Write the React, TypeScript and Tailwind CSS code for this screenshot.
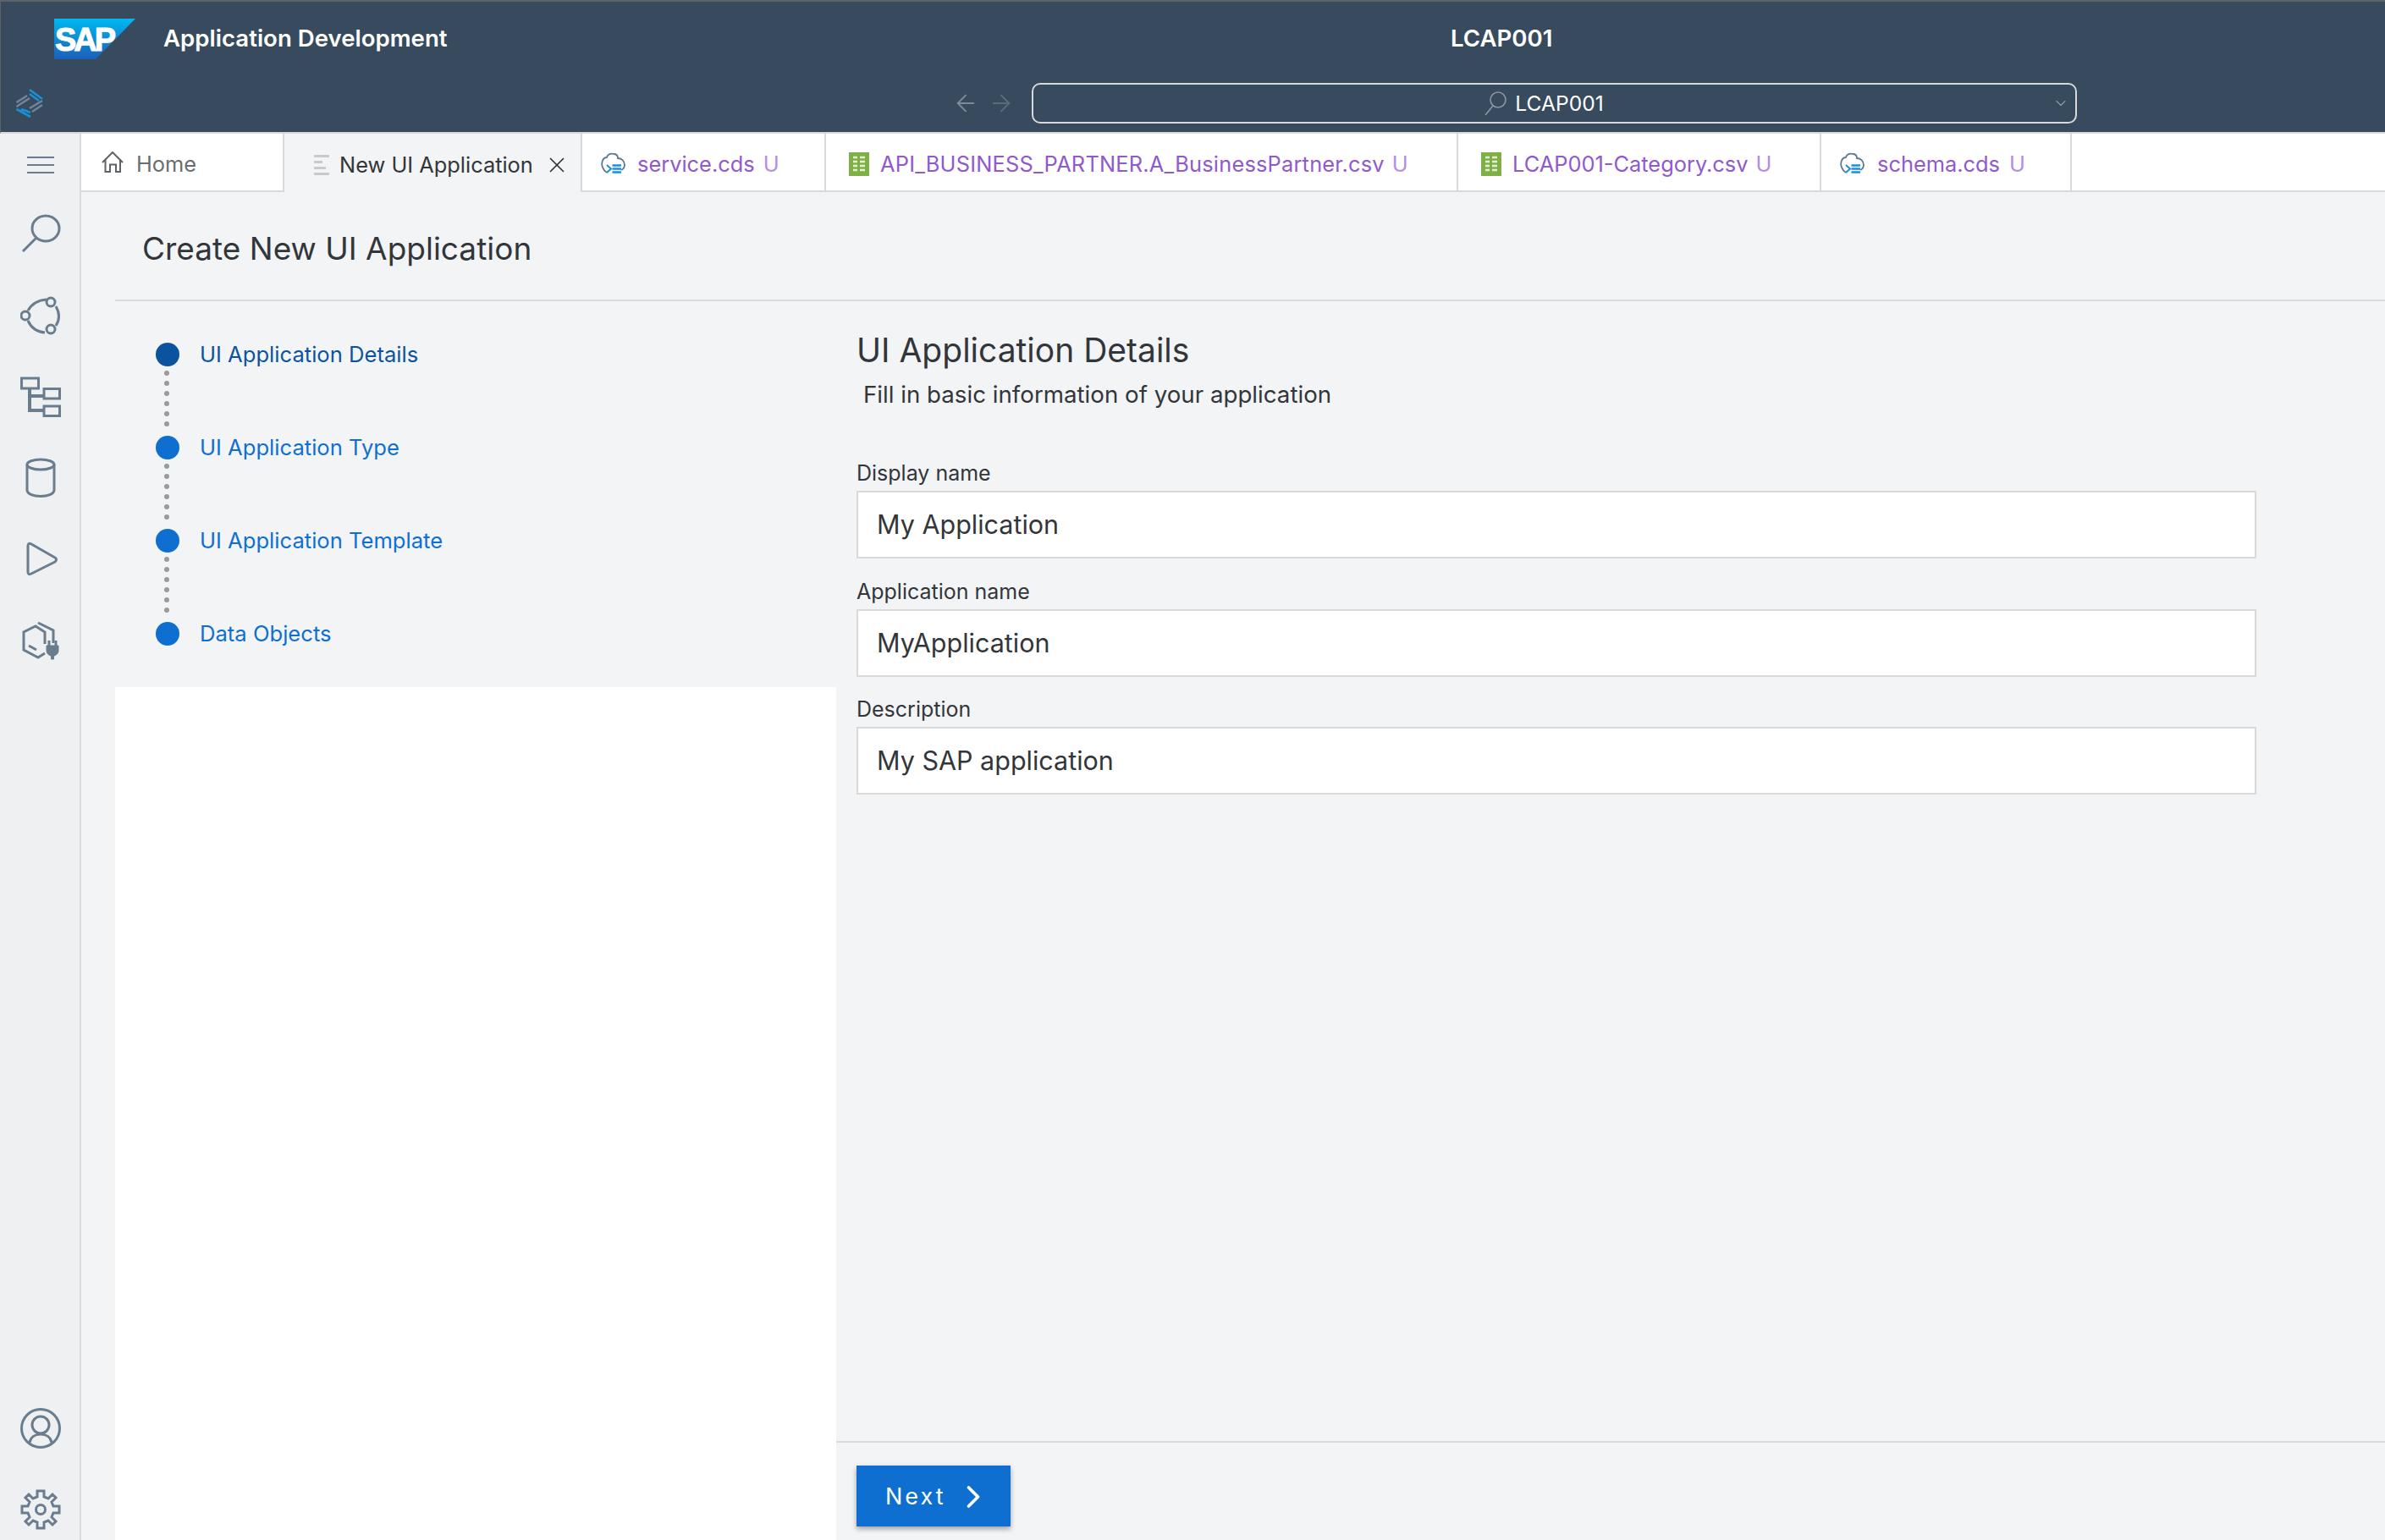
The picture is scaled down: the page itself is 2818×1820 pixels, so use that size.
import { ArrowLeft, ArrowRight, ChevronDown, ChevronRight, X } from "lucide-react";

const CloudIcon = () => (
  <svg width="29" height="28" viewBox="0 0 29 28" fill="none" className="shrink-0">
    <path
      d="M7 24 C2 21 0 14 2 10 C3 7 5 6 7 6 C8 2 12 1 15 2 C18 2 20 4 20 7 C24 7 28 10 28 15 C28 18 26 20 24 21"
      stroke="#5b7a94"
      strokeWidth="1.8"
    />
    <path d="M7 15 L12 19.5 L7 24" stroke="#1b90d8" strokeWidth="2" />
    <path d="M13.5 15.5 H24 M13.5 19.5 H24 M13.5 23.5 H24" stroke="#1b90d8" strokeWidth="2.4" />
  </svg>
);

const SheetIcon = () => (
  <svg width="24" height="28" viewBox="0 0 24 28" className="shrink-0">
    <rect width="24" height="28" fill="#7fb045" />
    <path d="M5 6 H10 M13 6 H19 M5 11 H10 M13 11 H19 M5 16 H10 M13 16 H19 M5 21 H10 M13 21 H19" stroke="#e6f0d8" strokeWidth="2.5" />
  </svg>
);

const tabs = [
  { name: "service.cds", width: "w-[288px]", pad: "pl-[22px]", gap: "gap-[14px]", text: "", icon: <CloudIcon /> },
  { name: "API_BUSINESS_PARTNER.A_BusinessPartner.csv", width: "w-[747px]", pad: "pl-[27px]", gap: "gap-[13px]", text: "tracking-[0.2px]", icon: <SheetIcon /> },
  { name: "LCAP001-Category.csv", width: "w-[429px]", pad: "pl-[27px]", gap: "gap-[13px]", text: "", icon: <SheetIcon /> },
  { name: "schema.cds", width: "w-[296px]", pad: "pl-[22px]", gap: "gap-[15px]", text: "", icon: <CloudIcon /> },
];

const steps = ["UI Application Details", "UI Application Type", "UI Application Template", "Data Objects"];

const fields = [
  { label: "Display name", value: "My Application" },
  { label: "Application name", value: "MyApplication" },
  { label: "Description", value: "My SAP application" },
];

const SideIcon = ({ children }: { children: React.ReactNode }) => (
  <svg width="48" height="48" viewBox="0 0 48 48" fill="none" stroke="#6a7d8e" strokeWidth="3">
    {children}
  </svg>
);

const App = () => {
  return (
    <div className="flex h-screen w-full flex-col overflow-hidden bg-[#f3f4f6] font-['Inter',sans-serif]">
      {/* top bar */}
      <header className="h-[158px] shrink-0 border-t-2 border-b-2 border-l border-[#5f6266] border-b-[#d9d9d9] bg-[#374a5e]">
        <div className="flex h-[96px] items-center text-[27.6px] font-semibold text-white">
          <div className="ml-[63px] w-[129px] shrink-0">
            <svg width="96" height="48" viewBox="0 0 96 48" className="-mt-[8px]">
              <defs>
                <linearGradient id="sapGrad" x1="0" y1="0" x2="0" y2="1">
                  <stop offset="0" stopColor="#00b8f1" />
                  <stop offset="1" stopColor="#1d5fb8" />
                </linearGradient>
              </defs>
              <polygon points="0,0 96,0 49,48 0,48" fill="url(#sapGrad)" />
              <text x="1" y="38" fill="#fff" stroke="#fff" strokeWidth="1" fontFamily="Liberation Sans" fontWeight="700" fontSize="38" letterSpacing="-3">
                SAP
              </text>
            </svg>
          </div>
          <span className="w-[336px] -translate-y-[4px] whitespace-nowrap">Application Development</span>
          <span className="ml-[1185px] -translate-y-[4px]">LCAP001</span>
        </div>
        <div className="flex h-[58px] items-start">
          <svg width="36" height="34" viewBox="0 0 36 34" className="mt-[7px] ml-[17px]" fill="none" strokeWidth="2.6">
            <path d="M17 1 L32 12 M17 6 L28 14 M1.5 24 L18 33 M7 24 L18 28" stroke="#1b90d8" />
            <path d="M1.5 16 L14 8 M1.5 21 L17 11 M17 23 L32 14 M20 27 L32 19" stroke="#71859a" />
          </svg>
          <div className="ml-[1071px] flex w-[74px] justify-between pt-[8px]">
            <ArrowLeft size={32} strokeWidth={1.5} className="text-[#7c8a98]" />
            <ArrowRight size={32} strokeWidth={1.5} className="text-[#5a6b7c]" />
          </div>
          <div className="relative ml-[20px] flex h-[48px] w-[1235px] items-center justify-center rounded-[10px] border-2 border-[#d9d9d9] pr-[25px] text-[24.6px] text-white">
            <svg width="28" height="28" viewBox="0 0 28 28" fill="none" stroke="#8a97a4" strokeWidth="1.6" className="mr-[9px]">
              <circle cx="17" cy="10" r="9" />
              <path d="M11 17 L2 28" />
            </svg>
            <span>LCAP001</span>
            <ChevronDown size={20} strokeWidth={1.5} className="absolute right-[7px] text-[#8a97a4]" />
          </div>
        </div>
      </header>

      <div className="flex min-h-0 flex-1">
        {/* activity bar */}
        <aside className="flex w-[96px] shrink-0 flex-col items-center border-r-2 border-[#d9dadc] bg-[#eef0f2] pt-[13px] pl-[2px]">
          <div className="flex h-[48px] items-center">
            <div className="flex w-[32px] flex-col gap-[7px]">
              <span className="h-[2px] bg-[#6a7d8e]"></span>
              <span className="h-[2px] bg-[#6a7d8e]"></span>
              <span className="h-[2px] bg-[#6a7d8e]"></span>
            </div>
          </div>
          <div className="mt-[34px] flex flex-col gap-[48px]">
            <SideIcon>
              <ellipse cx="30" cy="17" rx="16" ry="15" />
              <path d="M19 28 L3 44" />
            </SideIcon>
            <SideIcon>
              <circle cx="36" cy="8" r="5" />
              <circle cx="36" cy="40" r="5" />
              <circle cx="6" cy="24" r="5" />
              <path d="M9 18 Q16 6 31 5 M9 30 Q15 43 29 44 M42 13 Q49 25 42 36" />
            </SideIcon>
            <SideIcon>
              <rect x="1.5" y="2" width="20" height="12" />
              <rect x="28" y="14.5" width="18.5" height="11.5" />
              <rect x="28" y="35" width="18.5" height="11.5" />
              <path d="M11 15 V40 H28 M11 23 H28" strokeWidth="4" />
            </SideIcon>
            <SideIcon>
              <ellipse cx="24" cy="8" rx="16" ry="6" />
              <path d="M8 8 V38 C8 48 40 48 40 38 V8" />
            </SideIcon>
            <SideIcon>
              <path d="M9 8 L9 39 Q9 43 13 41 L41 27 Q44 24 41 22 L13 6 Q9 4 9 8 Z" strokeLinejoin="round" />
            </SideIcon>
            <SideIcon>
              <path d="M29 28 V14 L18 7 L4 14 V35 L21 44 L29 39 M10 30 L19 35" />
              <path d="M21 3 L39 12 V27" />
              <path d="M31 30 H45 V36 C45 40 41 42 39.5 42 V46 H36.5 V42 C35 42 31 40 31 36 Z" fill="#6a7d8e" strokeWidth="1" />
              <path d="M34 24 V30 M42 24 V30" strokeWidth="3" />
            </SideIcon>
          </div>
          <div className="mt-auto mb-[12px] flex flex-col gap-[48px]">
            <SideIcon>
              <circle cx="24" cy="24" r="22.5" />
              <circle cx="24" cy="20" r="10" />
              <path d="M11 41 C12 34 18 31 24 31 C30 31 36 34 37 41" />
            </SideIcon>
            <svg width="48" height="48" viewBox="0 0 48 48" fill="none" stroke="#6a7d8e" strokeWidth="3" strokeLinejoin="miter">
              <circle cx="24" cy="24" r="5.5" />
              <path d="M20 2 H28 V9 L33 11 L38 6 L42 10 L37 15 L39 20 H46 V28 H39 L37 33 L42 38 L38 42 L33 37 L28 39 V46 H20 V39 L15 37 L10 42 L6 38 L11 33 L9 28 H2 V20 H9 L11 15 L6 10 L10 6 L15 11 L20 9 Z" />
            </svg>
          </div>
        </aside>

        <div className="flex min-w-0 flex-1 flex-col">
          {/* editor tabs */}
          <div className="flex h-[69px] shrink-0 bg-white text-[25.4px] leading-none">
            <div className="flex w-[240px] items-center gap-[15px] border-r-2 border-b-2 border-[#d9d9d9] pt-[4px] pl-[24px] text-[#6a6d70]">
              <svg width="26" height="26" viewBox="0 0 26 26" fill="none" stroke="#5f6367" strokeWidth="2" className="shrink-0 -translate-y-[2px]">
                <path d="M1 13 L13 1 L25 13 M4.5 9 V24 H10 V15.5 H17 V24 H22 V9" />
              </svg>
              <span>Home</span>
            </div>
            <div className="flex w-[352px] items-center border-r-2 border-[#d9d9d9] bg-[#f3f4f6] pt-[4px] pl-[35px] text-[#32363a]">
              <div className="flex w-[18px] flex-col gap-[4px]">
                <span className="h-[3px] w-[18px] bg-[#c8cbcd]"></span>
                <span className="h-[3px] w-[10px] bg-[#c8cbcd]"></span>
                <span className="h-[3px] w-[14px] bg-[#c8cbcd]"></span>
                <span className="h-[3px] w-[18px] bg-[#c8cbcd]"></span>
              </div>
              <span className="ml-[12px] whitespace-nowrap">New UI Application</span>
              <X size={30} strokeWidth={1.4} className="ml-[13px]" />
            </div>
            {tabs.map((tab) => (
              <div
                key={tab.name}
                className={`flex shrink-0 items-center border-r-2 border-b-2 border-[#d9d9d9] pt-[4px] ${tab.width} ${tab.pad} ${tab.gap} text-[#9059cc]`}
              >
                {tab.icon}
                <span className={`whitespace-nowrap ${tab.text}`}>{tab.name}</span>
                <span className="-ml-[4px] text-[#b48ede]">U</span>
              </div>
            ))}
            <div className="flex-1 border-b-2 border-[#d9d9d9]"></div>
          </div>

          <div className="ml-[40px] flex min-h-0 flex-1 flex-col">
            <div className="flex h-[129px] shrink-0 items-center border-b-2 border-[#d9dadc] pt-[6px] pl-[32px] text-[37px] text-[#32363a]">
              Create New UI Application
            </div>
            <div className="flex min-h-0 flex-1">
              {/* stepper column */}
              <div className="flex w-[852px] shrink-0 flex-col">
                <div className="h-[456px] shrink-0 pt-[49px] pl-[48px]">
                  {steps.map((step, i) => (
                    <div key={step} className="relative h-[110px]">
                      <div className="flex h-[28px] items-center gap-[24px]">
                        <span className={`h-[28px] w-[28px] rounded-full ${i === 0 ? "bg-[#0a549f]" : "bg-[#0e6fd1]"}`}></span>
                        <span className={`text-[25.6px] whitespace-nowrap ${i === 0 ? "text-[#0a549f]" : "text-[#0e6fd1]"}`}>{step}</span>
                      </div>
                      {i < steps.length - 1 && (
                        <div className="absolute top-[33px] left-[10px] flex h-[66px] flex-col gap-[6px] overflow-hidden">
                          {[0, 1, 2, 3, 4, 5].map((d) => (
                            <span key={d} className="h-[6px] w-[6px] shrink-0 rounded-full bg-[#9a9a9a]"></span>
                          ))}
                        </div>
                      )}
                    </div>
                  ))}
                </div>
                <div className="flex-1 bg-white"></div>
              </div>

              {/* form column */}
              <div className="flex min-w-0 flex-1 flex-col">
                <div className="flex-1 pt-[33px] pl-[24px]">
                  <h2 className="text-[39px] leading-[50px] font-normal text-[#32363a]">UI Application Details</h2>
                  <p className="mt-[9px] pl-[8px] text-[27.7px] leading-[36px] text-[#32363a]">Fill in basic information of your application</p>
                  <div className="mt-[60px] flex w-[1654px] flex-col gap-[23.5px]">
                    {fields.map((field) => (
                      <div key={field.label}>
                        <label className="block text-[25px] leading-[31px] text-[#32363a]">{field.label}</label>
                        <div className="mt-[5px] flex h-[80px] items-center border-2 border-[#d9d9d9] bg-white pl-[22px] text-[30.5px] text-[#32363a]">
                          {field.value}
                        </div>
                      </div>
                    ))}
                  </div>
                </div>
                <div className="h-[117px] shrink-0 border-t-2 border-[#d9dadc] pt-[27px] pl-[24px]">
                  <button className="flex h-[72px] w-[182px] items-center gap-[10px] bg-[#0e6fd1] pt-[2px] pl-[34px] text-[27px] tracking-[3px] text-white shadow-[0_3px_6px_rgba(0,0,0,0.35)]">
                    Next
                    <ChevronRight size={44} strokeWidth={2} />
                  </button>
                </div>
              </div>
            </div>
          </div>
        </div>
      </div>
    </div>
  );
};

export default App;
